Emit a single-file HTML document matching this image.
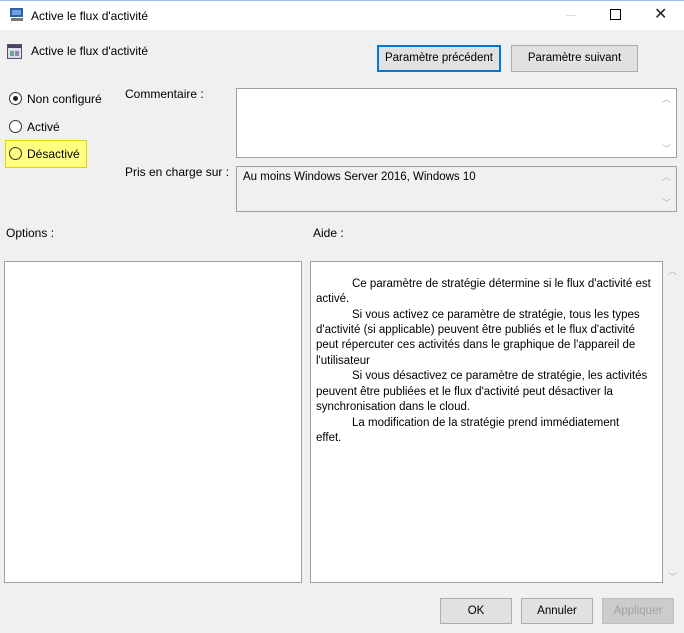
<!DOCTYPE html>
<html><head><meta charset="utf-8"><style>
*{margin:0;padding:0;box-sizing:border-box}
body{width:684px;height:633px;background:#f0f0f0;font-family:"Liberation Sans",sans-serif;font-size:11.5px;color:#000;position:relative;overflow:hidden}
.a{position:absolute;white-space:nowrap}
.btn{position:absolute;background:#e1e1e1;border:1px solid #adadad;text-align:center;line-height:24px}
.box{position:absolute;background:#fff;border:1px solid #a0a0a0}
.rad{position:absolute;width:13px;height:13px;border:1px solid #333;border-radius:50%;background:#fff}
.arr{position:absolute;color:#b0b0b0;font-size:9px}
</style></head><body>
<div class="a" style="left:0;top:0;width:684px;height:30px;background:#fff;border-top:1px solid #9cc3e5"></div>
<svg class="a" style="left:9px;top:7px" width="16" height="16"><rect x="1" y="1" width="13" height="9" fill="#2d5fa8"/><rect x="3" y="3" width="9" height="5" fill="#6fa0e0"/><rect x="2" y="11" width="12" height="3" fill="#777"/></svg>
<div class="a" style="left:31px;top:9px;font-size:12px">Active le flux d'activité</div>
<div class="a" style="left:566px;top:15px;width:10px;height:1px;background:#ddd"></div>
<div class="a" style="left:610px;top:9px;width:11px;height:11px;border:1px solid #000"></div>
<div class="a" style="left:654px;top:4px;font-size:16px;color:#222">✕</div>
<svg class="a" style="left:7px;top:44px" width="16" height="16"><rect x="0.5" y="0.5" width="14" height="14" fill="#dde" stroke="#556"/><rect x="1" y="1" width="13" height="3" fill="#446"/><rect x="3" y="7" width="4" height="5" fill="#6a8"/><rect x="8" y="7" width="4" height="5" fill="#88a"/></svg>
<div class="a" style="left:31px;top:44px;font-size:12px">Active le flux d'activité</div>
<div class="btn" style="left:377px;top:45px;width:124px;height:27px;border:2px solid #0078d7;line-height:23px">Paramètre précédent</div>
<div class="btn" style="left:511px;top:45px;width:127px;height:27px">Paramètre suivant</div>
<div class="rad" style="left:9px;top:92px"><div style="position:absolute;left:3px;top:3px;width:5px;height:5px;border-radius:50%;background:#222"></div></div>
<div class="a" style="left:27px;top:92px;font-size:12px">Non configuré</div>
<div class="rad" style="left:9px;top:120px"></div>
<div class="a" style="left:27px;top:120px;font-size:12px">Activé</div>
<div class="a" style="left:5px;top:140px;width:82px;height:28px;background:#ffff80;border:1px solid #e6d200"></div>
<div class="rad" style="left:9px;top:147px;background:#ffff80"></div>
<div class="a" style="left:27px;top:147px;font-size:12px">Désactivé</div>
<div class="a" style="left:125px;top:87px;font-size:12px">Commentaire :</div>
<div class="box" style="left:236px;top:88px;width:441px;height:70px"></div>
<div class="arr" style="left:662px;top:92px">︿</div><div class="arr" style="left:662px;top:142px">﹀</div>
<div class="a" style="left:125px;top:165px;font-size:12px">Pris en charge sur :</div>
<div class="box" style="left:236px;top:166px;width:441px;height:46px;background:#f0f0f0"></div>
<div class="a" style="left:243px;top:171px">Au moins Windows Server 2016, Windows 10</div>
<div class="arr" style="left:662px;top:170px">︿</div><div class="arr" style="left:662px;top:196px">﹀</div>
<div class="a" style="left:6px;top:226px;font-size:12px">Options :</div>
<div class="a" style="left:313px;top:226px;font-size:12px">Aide :</div>
<div class="box" style="left:4px;top:261px;width:298px;height:322px"></div>
<div class="box" style="left:310px;top:261px;width:353px;height:322px"></div>
<div class="arr" style="left:668px;top:264px">︿</div><div class="arr" style="left:668px;top:570px">﹀</div>
<div class="a" style="left:352px;top:278px">Ce paramètre de stratégie détermine si le flux d'activité est</div>
<div class="a" style="left:316px;top:293px">activé.</div>
<div class="a" style="left:352px;top:309px">Si vous activez ce paramètre de stratégie, tous les types</div>
<div class="a" style="left:316px;top:324px">d'activité (si applicable) peuvent être publiés et le flux d'activité</div>
<div class="a" style="left:316px;top:339px">peut répercuter ces activités dans le graphique de l'appareil de</div>
<div class="a" style="left:316px;top:355px">l'utilisateur</div>
<div class="a" style="left:352px;top:370px">Si vous désactivez ce paramètre de stratégie, les activités</div>
<div class="a" style="left:316px;top:386px">peuvent être publiées et le flux d'activité peut désactiver la</div>
<div class="a" style="left:316px;top:401px">synchronisation dans le cloud.</div>
<div class="a" style="left:352px;top:417px">La modification de la stratégie prend immédiatement</div>
<div class="a" style="left:316px;top:432px">effet.</div>
<div class="btn" style="left:440px;top:598px;width:72px;height:26px">OK</div>
<div class="btn" style="left:521px;top:598px;width:72px;height:26px">Annuler</div>
<div class="btn" style="left:602px;top:598px;width:72px;height:26px;background:#ccc;border-color:#bfbfbf;color:#a0a0a0">Appliquer</div>
</body></html>
